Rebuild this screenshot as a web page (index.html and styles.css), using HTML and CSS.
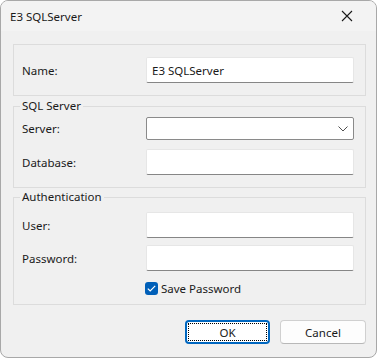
FILE: index.html
```html
<!DOCTYPE html>
<html>
<head>
	<title>E3 SQLServer</title>
	<link rel="stylesheet" href="styles.css">
</head>
<body>

	<div class="window">
		<div class="titlebar">
			<span class="title">E3 SQLServer</span>
			<svg class="close" width="12" height="12" viewBox="0 0 12 12">
				<path d="M1 1 L11 11 M11 1 L1 11" stroke="#1a1a1a" stroke-width="1.1" fill="none"/>
			</svg>
		</div>

		<div class="content">
			<fieldset class="group group-name">
				<div class="row">
					<label>Name:</label>
					<input class="field" type="text" value="E3 SQLServer">
				</div>
			</fieldset>

			<fieldset class="group group-sql">
				<legend>SQL Server</legend>
				<div class="row">
					<label>Server:</label>
					<div class="combo">
						<svg class="chevron" width="10" height="6" viewBox="0 0 10 6">
							<path d="M0.5 0.5 L5 5 L9.5 0.5" stroke="#505050" stroke-width="1" fill="none"/>
						</svg>
					</div>
				</div>
				<div class="row">
					<label>Database:</label>
					<input class="field" type="text" value="">
				</div>
			</fieldset>

			<fieldset class="group group-auth">
				<legend>Authentication</legend>
				<div class="row">
					<label>User:</label>
					<input class="field" type="text" value="">
				</div>
				<div class="row">
					<label>Password:</label>
					<input class="field" type="password" value="">
				</div>
				<div class="row row-check">
					<span class="checkbox">
						<svg width="9" height="7" viewBox="0 0 9 7">
							<path d="M0.8 3.6 L3.2 6 L8.2 0.9" stroke="#fff" stroke-width="1.2" fill="none"/>
						</svg>
					</span>
					<span class="check-label">Save Password</span>
				</div>
			</fieldset>

			<div class="buttons">
				<button class="btn btn-default"><span class="focus">OK</span></button>
				<button class="btn">Cancel</button>
			</div>
		</div>
	</div>

</body>
</html>
```

FILE: styles.css
```css
body{
	margin: 0;
	background: #ffffff;
	font-family: "Noto Sans", "Open Sans", sans-serif;
	font-size: 11.5px;
	color: #1a1a1a;
}

.window{
	width: 377px;
	height: 358px;
	box-sizing: border-box;
	border: 1px solid #a8a8a8;
	border-radius: 8px;
	background: #f0f0f0;
	overflow: hidden;
	display: flex;
	flex-direction: column;
}

.titlebar{
	flex: none;
	height: 30px;
	background: #f3f3f3;
	display: flex;
	align-items: center;
	justify-content: space-between;
	padding: 0 23px 0 9px;
}

.title{
	font-size: 11.5px;
	margin-top: 1px;
}

.content{
	padding: 13px 10px 0 12px;
	display: flex;
	flex-direction: column;
}

.group{
	margin: 0;
	border: 1px solid #dcdcdc;
	padding: 0 11px 0 8px;
	display: flex;
	flex-direction: column;
}

.group legend{
	padding: 0 2px;
	margin-left: -2px;
	line-height: 16px;
}

.group-name{
	padding-top: 12px;
	padding-bottom: 12px;
}

.group-sql{
	margin-top: 2px;
	padding-top: 3px;
	padding-bottom: 12px;
	gap: 9px;
}

.group-auth{
	margin-top: 1px;
	padding-top: 7px;
	padding-bottom: 8px;
	gap: 7px;
}

.row{
	display: flex;
	align-items: center;
}

.row label{
	width: 124px;
	flex: none;
}

.field{
	flex: 1;
	height: 26px;
	box-sizing: border-box;
	margin: 0;
	border: 1px solid #e6e6e6;
	border-bottom-color: #868686;
	border-radius: 2px;
	background: #fff;
	font-family: inherit;
	font-size: 11.5px;
	color: #1a1a1a;
	padding: 0 5px;
	outline: none;
}

.combo{
	flex: 1;
	height: 23px;
	box-sizing: border-box;
	border: 1px solid #8a8a8a;
	border-radius: 2px;
	background: #fff;
	display: flex;
	align-items: center;
	justify-content: flex-end;
	padding-right: 5px;
}

.row-check{
	padding-left: 123px;
	margin-top: 3px;
	gap: 3px;
}

.checkbox{
	width: 13px;
	height: 13px;
	border-radius: 3px;
	background: #005fb8;
	display: flex;
	align-items: center;
	justify-content: center;
}

.buttons{
	display: flex;
	justify-content: flex-end;
	gap: 10px;
	margin-top: 15px;
}

.btn{
	width: 86px;
	height: 24px;
	box-sizing: border-box;
	border: 1px solid #d0d0d0;
	border-bottom-color: #b8b8b8;
	border-radius: 4px;
	background: #fdfdfd;
	font-family: inherit;
	font-size: 11.5px;
	color: #1a1a1a;
	padding: 0;
}

.btn-default{
	width: 85px;
	border: 2px solid #0067c0;
	padding: 1px;
	background: #fff;
}

.btn-default .focus{
	display: flex;
	align-items: center;
	justify-content: center;
	height: 100%;
	box-sizing: border-box;
	border: 1px dotted #000;
}
```
